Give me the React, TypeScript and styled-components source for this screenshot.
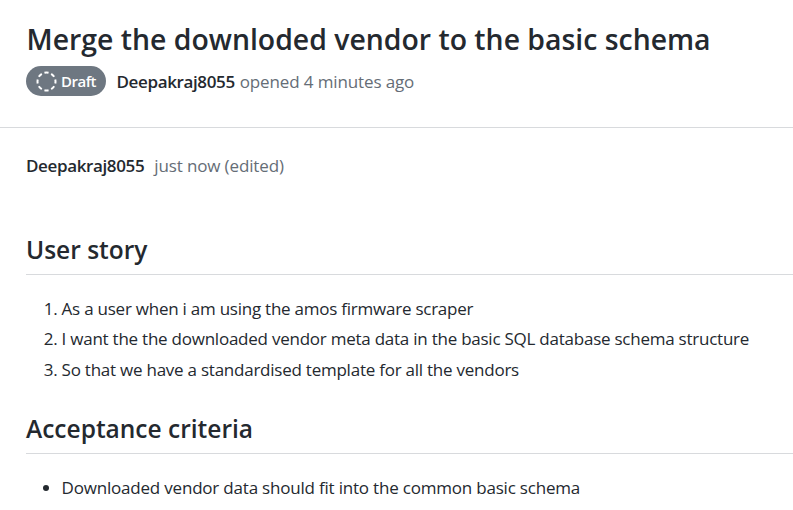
import React from 'react';
import styled, { createGlobalStyle } from 'styled-components';

const GlobalStyle = createGlobalStyle`
  * { box-sizing: border-box; }
  body {
    margin: 0;
    background: #fff;
    color: #24292f;
    font-family: 'Open Sans', 'Noto Sans', sans-serif;
    font-size: 17px;
    overflow: hidden;
  }
`;

const Page = styled.main`
  height: 510px;
  overflow: hidden;
  white-space: nowrap;
`;

const Header = styled.header`
  height: 128px;
  padding: 19px 0 0 26px;
  border-bottom: 1px solid #d8dadd;
`;

const Title = styled.h1`
  margin: 0;
  padding-left: 0.5px;
  font-size: 28.4px;
  line-height: 40px;
  font-weight: 600;
`;

const Meta = styled.div`
  display: flex;
  align-items: center;
  height: 30px;
  margin-top: 7px;
`;

const Badge = styled.span`
  display: flex;
  align-items: center;
  gap: 4.5px;
  width: 80px;
  height: 30px;
  padding-left: 9.5px;
  margin-right: 10.5px;
  border-radius: 15px;
  background: #6e7781;
  color: #fff;
  font-size: 15px;
  font-weight: 600;
  letter-spacing: -0.5px;
`;

const Author = styled.span`
  font-weight: 600;
  letter-spacing: -0.37px;
`;

const Muted = styled.span<{ $gap: number }>`
  margin-left: ${p => p.$gap}px;
  letter-spacing: -0.13px;
  color: #656d76;
`;

const Comment = styled.article`
  padding: 22px 0 0 26px;
`;

const Byline = styled.div`
  display: flex;
  align-items: center;
  height: 30px;
  margin-bottom: 53px;
`;

const Heading = styled.h2`
  height: 42px;
  margin: 0 0 19px;
  border-bottom: 1px solid #d8dadd;
  font-size: 24.5px;
  line-height: 33px;
  font-weight: 600;
`;

const listStyles = `
  margin: 0;
  padding-left: 35.6px;
  line-height: 30.4px;
`;

const Ordered = styled.ol`
  ${listStyles}
  margin-bottom: 26.8px;
  letter-spacing: -0.24px;
`;

const Bullets = styled.ul`
  ${listStyles}
  letter-spacing: -0.2px;
`;

const DraftIcon = () => (
  <svg width="21" height="21" viewBox="0 0 21 21" fill="none" stroke="#fff" strokeWidth="2">
    <circle cx="10.5" cy="10.5" r="9" pathLength="80" strokeDasharray="6 4" strokeDashoffset="3" />
  </svg>
);

export default function App() {
  return (
    <>
      <GlobalStyle />
      <Page>
        <Header>
          <Title>Merge the downloded vendor to the basic schema</Title>
          <Meta>
            <Badge><DraftIcon />Draft</Badge>
            <Author>Deepakraj8055</Author>
            <Muted $gap={5}>opened 4 minutes ago</Muted>
          </Meta>
        </Header>
        <Comment>
          <Byline>
            <Author>Deepakraj8055</Author>
            <Muted $gap={10}>just now (edited)</Muted>
          </Byline>
          <Heading>User story</Heading>
          <Ordered>
            <li>As a user when i am using the amos firmware scraper</li>
            <li>I want the the downloaded vendor meta data in the basic SQL database schema structure</li>
            <li>So that we have a standardised template for all the vendors</li>
          </Ordered>
          <Heading>Acceptance criteria</Heading>
          <Bullets>
            <li>Downloaded vendor data should fit into the common basic schema</li>
          </Bullets>
        </Comment>
      </Page>
    </>
  );
}
